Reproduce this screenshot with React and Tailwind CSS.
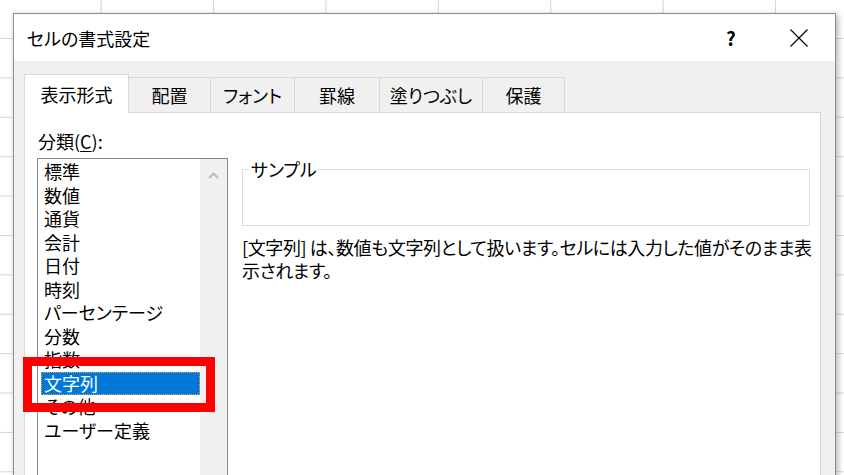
import React from "react";

const tabs = [
  { label: "表示形式", w: "w-[105px]", active: true },
  { label: "配置", w: "w-[82px]" },
  { label: "フォント", w: "w-[84px]" },
  { label: "罫線", w: "w-[85px]" },
  { label: "塗りつぶし", w: "w-[103px]" },
  { label: "保護", w: "w-[82px]" },
];

const categories = [
  "標準",
  "数値",
  "通貨",
  "会計",
  "日付",
  "時刻",
  "パーセンテージ",
  "分数",
  "指数",
  "文字列",
  "その他",
  "ユーザー定義",
];

function CloseIcon() {
  return (
    <svg width="18" height="18" viewBox="0 0 18 18" className="block">
      <path d="M0.5 0.5 L17.5 17.5 M17.5 0.5 L0.5 17.5" stroke="#000" strokeWidth="1.1" fill="none" />
    </svg>
  );
}

export default function App() {
  return (
    <div className="relative w-[844px] h-[475px] overflow-hidden bg-white bg-[linear-gradient(to_right,#d6d6d6_1px,transparent_1px),linear-gradient(to_bottom,#d6d6d6_1px,transparent_1px)] bg-[size:112.4px_39.4px] bg-[position:100.7px_38px] pt-[13px] pl-[13px] font-['Meiryo_UI','Noto_Sans_CJK_JP',sans-serif] [font-feature-settings:'palt'] text-black">
      {/* dialog window */}
      <div className="w-[823px] h-[500px] flex flex-col bg-[#f0f0f0] border border-[#8c8c8c] shadow-[2px_2px_6px_rgba(0,0,0,0.3)]">
        {/* title bar */}
        <div className="h-[47px] shrink-0 flex items-center bg-white pl-[13px]">
          <span className="text-[18px] leading-none">セルの書式設定</span>
          <div className="ml-auto flex items-center h-full">
            <div className="w-[46px] h-full flex items-center justify-center text-[19px] font-bold leading-none">?</div>
            <div className="w-[22px]" />
            <div className="w-[46px] h-full flex items-center justify-center">
              <CloseIcon />
            </div>
            <div className="w-[13px]" />
          </div>
        </div>

        {/* body */}
        <div className="flex-1 flex flex-col pl-[10px] pt-[13px]">
          {/* tabs */}
          <div className="h-[38px] flex items-end">
            {tabs.map((t) =>
              t.active ? (
                <div
                  key={t.label}
                  className={`${t.w} h-[39px] -mb-px relative z-10 flex items-center justify-center bg-white border-l border-t border-r border-[#d9d9d9] text-[18px] leading-none`}
                >
                  {t.label}
                </div>
              ) : (
                <div
                  key={t.label}
                  className={`${t.w} h-[35px] flex items-center justify-center bg-[#f0f0f0] border-t border-r border-[#d9d9d9] text-[18px] leading-none`}
                >
                  {t.label}
                </div>
              )
            )}
          </div>

          {/* tab panel */}
          <div className="w-[797px] flex-1 bg-white border border-[#d9d9d9] pl-[12px] pt-[16px]">
            <div className="text-[18px] leading-[24px] pl-px">
              分類(<span className="underline underline-offset-2">C</span>):
            </div>
            <div className="flex mt-[5px]">
              {/* category list */}
              <div className="w-[191px] h-[340px] shrink-0 flex border border-[#828790] bg-white">
                <div className="flex-1 pt-px pl-[3px]">
                  {categories.map((c) =>
                    c === "文字列" ? (
                      <div
                        key={c}
                        className="h-[23.5px] leading-[23.5px] text-[18px] pl-[3px] bg-[#0078d7] text-white outline-1 outline-dotted outline-[#f3a65a] -outline-offset-1 whitespace-nowrap"
                      >
                        {c}
                      </div>
                    ) : (
                      <div key={c} className="h-[23.5px] leading-[23.5px] text-[18px] pl-[3px] whitespace-nowrap">
                        {c}
                      </div>
                    )
                  )}
                </div>
                {/* scrollbar */}
                <div className="w-[27px] shrink-0 bg-[#f0f0f0] flex justify-center pt-[13px]">
                  <svg width="11" height="7" viewBox="0 0 11 7" className="block">
                    <path d="M1 6 L5.5 1.5 L10 6" stroke="#bcbcbc" strokeWidth="2" fill="none" />
                  </svg>
                </div>
              </div>

              {/* sample + description */}
              <div className="ml-[14px] w-[570px] shrink-0 flex flex-col">
                <fieldset className="w-[568px] h-[68px] border border-[#dcdcdc] m-0 p-0">
                  <legend className="ml-[7px] px-px text-[18px] leading-[22px]">サンプル</legend>
                </fieldset>
                <p className="mt-[10px] text-[18px] leading-[23px] tracking-[-0.4px] whitespace-nowrap">
                  [文字列] は、数値も文字列として扱います。セルには入力した値がそのまま表
                  <br />
                  示されます。
                </p>
              </div>
            </div>
          </div>
        </div>
      </div>

      {/* red highlight annotation */}
      <div className="absolute left-[23px] top-[357px] w-[192px] h-[55px] border-[9px] border-[#ff0000]" />
    </div>
  );
}
